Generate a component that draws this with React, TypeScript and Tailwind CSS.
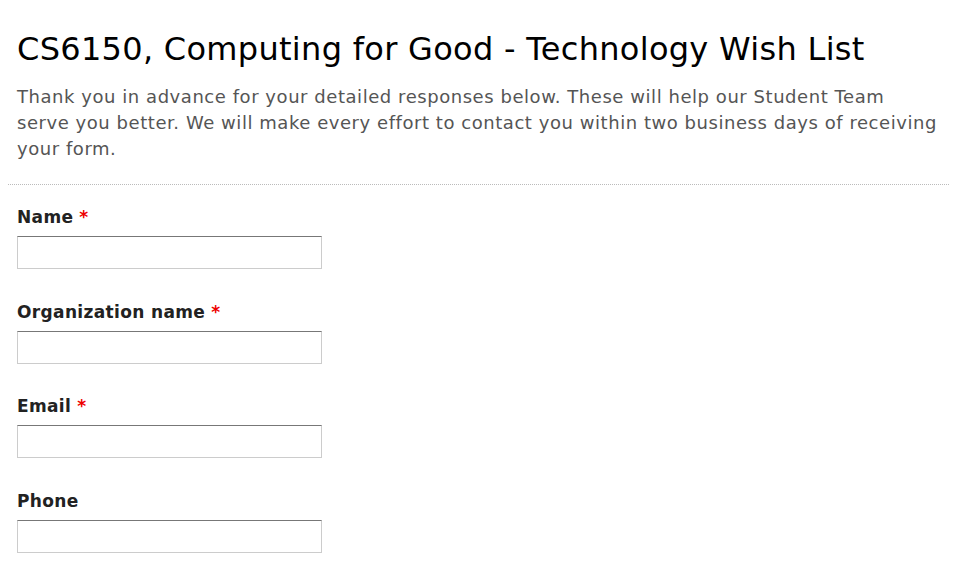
const fields = [
  { label: 'Name', required: true },
  { label: 'Organization name', required: true },
  { label: 'Email', required: true },
  { label: 'Phone', required: false },
];

export default function App() {
  return (
    <div className="min-h-screen bg-white font-['DejaVu_Sans',sans-serif]">
      <div className="px-[17px] pt-[28px]">
        <h1 className="text-[32px] leading-[42px] tracking-[0.3px] text-black">
          CS6150, Computing for Good - Technology Wish List
        </h1>
        <p className="mt-[14px] text-[18px] leading-[26px] text-[#555] tracking-[0.55px]">
          Thank you in advance for your detailed responses below. These will help our Student Team serve you
          better. We will make every effort to contact you within two business days of receiving your form.
        </p>
      </div>
      <div className="mx-[8px] mt-[22px] border-t border-dotted border-[#bbb]" />
      <div className="px-[17px] pt-[20px]">
        {fields.map((f) => (
          <div key={f.label} className="mb-[30.7px]">
            <div className="text-[17px] leading-[24px] font-bold tracking-[0.35px] text-[#222]">
              {f.label}
              {f.required && <span className="ml-[6px] text-[#e00]">*</span>}
            </div>
            <input
              type="text"
              className="mt-[7px] block h-[33px] w-[305px] border border-[#ccc] border-t-[#777] bg-white outline-none"
            />
          </div>
        ))}
      </div>
    </div>
  );
}
